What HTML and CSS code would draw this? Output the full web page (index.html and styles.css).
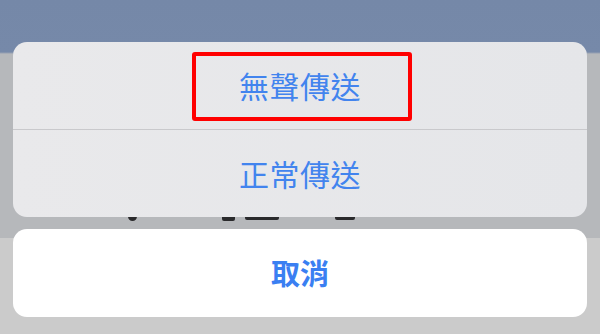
FILE: index.html
```html
<!DOCTYPE html>
<html lang="zh-Hant">
<head>
<meta charset="utf-8">
<link rel="stylesheet" href="styles.css">
</head>
<body>
<div class="screen">
  <div class="backdrop">
    <div class="behind-bar">
      <span class="bit bit-drop"></span>
      <span class="bit bit-dot"></span>
      <span class="bit bit-block"></span>
      <span class="bit bit-wide"></span>
      <span class="bit bit-end"></span>
    </div>
  </div>
  <div class="sheet">
    <div class="group">
      <div class="row row-first">
        <span class="label">無聲傳送</span>
        <span class="highlight"></span>
      </div>
      <div class="row">
        <span class="label">正常傳送</span>
      </div>
    </div>
    <div class="cancel">
      <span class="cancel-label">取消</span>
    </div>
  </div>
</div>
</body>
</html>
```

FILE: styles.css
```css
* { box-sizing: border-box; }
html, body { margin: 0; padding: 0; }
body {
  width: 600px;
  height: 334px;
  overflow: hidden;
  font-family: "Noto Sans CJK TC", "Noto Sans", sans-serif;
}
.screen {
  position: relative;
  width: 600px;
  height: 334px;
  background: linear-gradient(to bottom, #7588a8 0, #7689a9 52px, #b6b8bb 54px, #b6b8bb 238px, #cbcbcb 238px, #cbcbcb 334px);
}
.backdrop {
  width: 600px;
  height: 334px;
  padding-top: 210px;
}
.behind-bar {
  position: relative;
  height: 12px;
}
.bit {
  position: absolute;
  background: #2a2a2c;
  border-radius: 2px;
}
.bit-drop { left: 128px; top: 0; width: 9px; height: 11px; border-radius: 0 0 5px 5px; }
.bit-dot { left: 153px; top: 0; width: 3px; height: 7px; }
.bit-block { left: 222px; top: 0; width: 13px; height: 11px; }
.bit-wide { left: 245px; top: 0; width: 34px; height: 10px; }
.bit-end { left: 335px; top: 0; width: 20px; height: 10px; }

.sheet {
  position: absolute;
  left: 13px;
  top: 42px;
  width: 574px;
  display: flex;
  flex-direction: column;
  gap: 12px;
}
.group {
  background: linear-gradient(to right, #e9e9eb, #e5e6e9);
  border-radius: 14px;
  overflow: hidden;
  display: flex;
  flex-direction: column;
}
.row {
  position: relative;
  height: 87.5px;
  display: flex;
  align-items: center;
  justify-content: center;
}
.row-first {
  border-bottom: 1px solid #c9c9cc;
}
.label {
  font-size: 30px;
  font-weight: 400;
  color: #4284ee;
  letter-spacing: 0.5px;
  line-height: 1;
}
.highlight {
  position: absolute;
  left: 179px;
  top: 10px;
  width: 220px;
  height: 69px;
  border: 4px solid #ff0000;
  border-radius: 3px;
}
.cancel {
  height: 87.5px;
  background: #ffffff;
  border-radius: 14px;
  display: flex;
  align-items: center;
  justify-content: center;
}
.cancel-label {
  font-size: 29px;
  font-weight: 700;
  color: #3a7ff2;
  line-height: 1;
}
```
